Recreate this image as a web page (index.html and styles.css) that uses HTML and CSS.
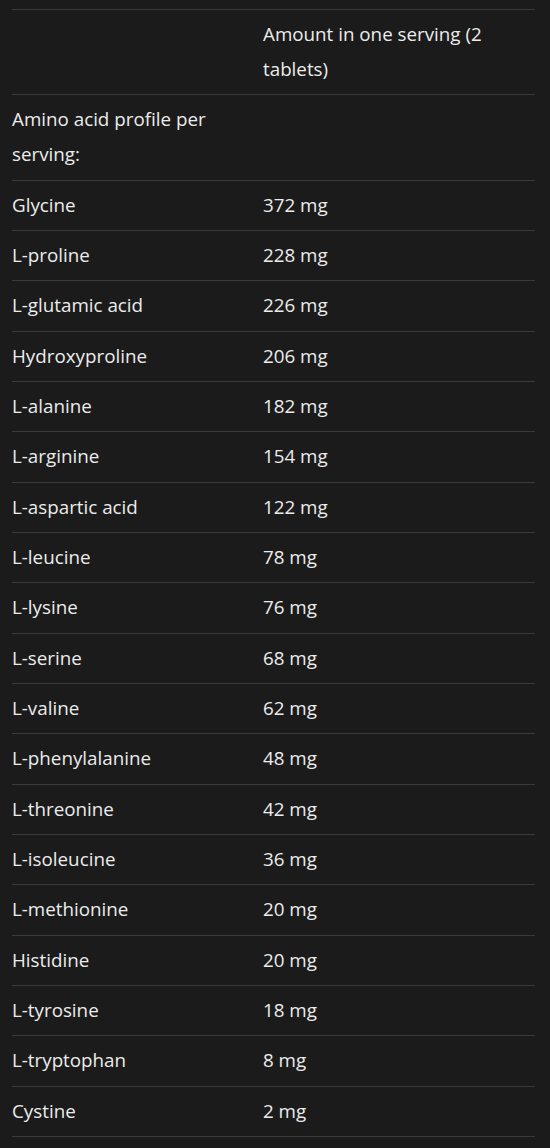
FILE: index.html
```html
<!DOCTYPE html>
<html>
<head>
<meta charset="utf-8">
<link rel="stylesheet" href="styles.css">
</head>
<body>
<div class="wrap">
<table class="amino">
<colgroup><col class="c1"><col class="c2"></colgroup>
<tbody>
<tr><td></td><td>Amount in one serving (2 tablets)</td></tr>
<tr><td>Amino acid profile per serving:</td><td></td></tr>
<tr><td>Glycine</td><td>372 mg</td></tr>
<tr><td>L-proline</td><td>228 mg</td></tr>
<tr><td>L-glutamic acid</td><td>226 mg</td></tr>
<tr><td>Hydroxyproline</td><td>206 mg</td></tr>
<tr><td>L-alanine</td><td>182 mg</td></tr>
<tr><td>L-arginine</td><td>154 mg</td></tr>
<tr><td>L-aspartic acid</td><td>122 mg</td></tr>
<tr><td>L-leucine</td><td>78 mg</td></tr>
<tr><td>L-lysine</td><td>76 mg</td></tr>
<tr><td>L-serine</td><td>68 mg</td></tr>
<tr><td>L-valine</td><td>62 mg</td></tr>
<tr><td>L-phenylalanine</td><td>48 mg</td></tr>
<tr><td>L-threonine</td><td>42 mg</td></tr>
<tr><td>L-isoleucine</td><td>36 mg</td></tr>
<tr><td>L-methionine</td><td>20 mg</td></tr>
<tr><td>Histidine</td><td>20 mg</td></tr>
<tr><td>L-tyrosine</td><td>18 mg</td></tr>
<tr><td>L-tryptophan</td><td>8 mg</td></tr>
<tr><td>Cystine</td><td>2 mg</td></tr>
</tbody>
</table>
</div>
</body>
</html>
```

FILE: styles.css
```css
html, body {
  margin: 0;
  padding: 0;
  background: #1b1b1b;
}
body {
  font-family: "Open Sans", "Noto Sans", sans-serif;
  font-size: 18.8px;
  color: #ececec;
}
.wrap {
  padding: 8.5px 15px 0 12px;
}
.amino {
  width: 523px;
  border-collapse: collapse;
  table-layout: fixed;
  border-top: 1px solid #3a3a3a;
}
.c1 { width: 251px; }
.c2 { width: 272px; }
.amino td {
  padding: 7.1px 0 7.1px 0;
  line-height: 35.15px;
  border-bottom: 1px solid #3a3a3a;
  vertical-align: top;
  text-align: left;
}
```
